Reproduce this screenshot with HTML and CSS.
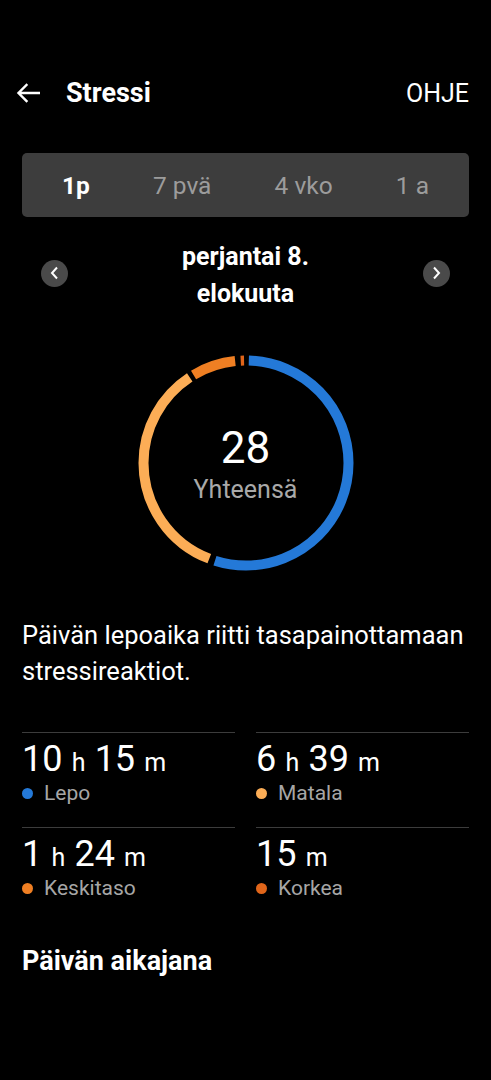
FILE: index.html
```html
<!DOCTYPE html>
<html lang="fi">
<head>
    <meta charset="UTF-8">
    <meta name="viewport" content="width=device-width, initial-scale=1.0">
    <title>Stressi</title>
    <link rel="stylesheet" href="styles.css">
</head>
<body>
    <header class="top-bar">
        <a href="#" class="back-btn" aria-label="Takaisin">
            <svg width="24" height="20" viewBox="0 0 24 20">
                <path d="M23 10H3 M10.5 2 L2.5 10 L10.5 18" fill="none" stroke="#fff" stroke-width="2.4" stroke-linecap="square"/>
            </svg>
        </a>
        <h1>Stressi</h1>
        <a href="#" class="help-link">OHJE</a>
    </header>

    <nav class="range-tabs">
        <span class="tab active">1p</span>
        <span class="tab">7 pvä</span>
        <span class="tab">4 vko</span>
        <span class="tab">1 a</span>
    </nav>

    <section class="date-nav">
        <button class="round-btn" aria-label="Edellinen">
            <svg width="14" height="16" viewBox="0 0 14 16">
                <path d="M9 2.5 L4 8 L9 13.5" fill="none" stroke="#fff" stroke-width="2"/>
            </svg>
        </button>
        <div class="date-label">perjantai 8.<br>elokuuta</div>
        <button class="round-btn" aria-label="Seuraava">
            <svg width="14" height="16" viewBox="0 0 14 16">
                <path d="M5 2.5 L10 8 L5 13.5" fill="none" stroke="#fff" stroke-width="2"/>
            </svg>
        </button>
    </section>

    <section class="ring-wrap">
        <svg class="ring" width="220" height="220" viewBox="0 0 220 220">
            <g transform="rotate(-90 110 110)" fill="none" stroke-width="10">
                <circle cx="110" cy="110" r="102.5" stroke="#2479d8" stroke-dasharray="350.3 644" stroke-dashoffset="-2.9"/>
                <circle cx="110" cy="110" r="102.5" stroke="#fcad56" stroke-dasharray="224.6 644" stroke-dashoffset="-359.1"/>
                <circle cx="110" cy="110" r="102.5" stroke="#ef7f23" stroke-dasharray="44 644" stroke-dashoffset="-588.2"/>
                <circle cx="110" cy="110" r="102.5" stroke="#e0651a" stroke-dasharray="3.4 644" stroke-dashoffset="-637.8"/>
            </g>
        </svg>
        <div class="ring-center">
            <div class="ring-value">28</div>
            <div class="ring-caption">Yhteensä</div>
        </div>
    </section>

    <p class="summary">Päivän lepoaika riitti tasapainottamaan stressireaktiot.</p>

    <section class="stats">
        <div class="stat">
            <div class="stat-value">10<span class="unit"> h </span>15<span class="unit"> m</span></div>
            <div class="stat-label"><span class="dot rest"></span>Lepo</div>
        </div>
        <div class="stat">
            <div class="stat-value">6<span class="unit"> h </span>39<span class="unit"> m</span></div>
            <div class="stat-label"><span class="dot low"></span>Matala</div>
        </div>
        <div class="stat">
            <div class="stat-value">1<span class="unit"> h </span>24<span class="unit"> m</span></div>
            <div class="stat-label"><span class="dot medium"></span>Keskitaso</div>
        </div>
        <div class="stat">
            <div class="stat-value">15<span class="unit"> m</span></div>
            <div class="stat-label"><span class="dot high"></span>Korkea</div>
        </div>
    </section>

    <h2 class="timeline-title">Päivän aikajana</h2>
</body>
</html>
```

FILE: styles.css
```css
body {
    margin: 0;
    background: #000;
    color: #fff;
    font-family: Roboto, "Noto Sans", sans-serif;
}
.top-bar {
    display: flex;
    align-items: center;
    height: 56px;
    margin-top: 65px;
    padding: 0 22px 0 16px;
}
.back-btn {
    display: flex;
    margin-right: 26px;
}
.top-bar h1 {
    flex: 1;
    margin: 0;
    font-size: 27px;
    font-weight: 700;
}
.help-link {
    color: #fff;
    text-decoration: none;
    font-size: 25px;
}
.range-tabs {
    display: flex;
    justify-content: space-between;
    align-items: center;
    height: 64px;
    margin: 32px 22px 0;
    padding: 0 40px;
    background: #3d3d3d;
    border-radius: 5px;
}
.tab {
    font-size: 24.5px;
    color: #9c9c9c;
}
.tab.active {
    color: #fff;
    font-weight: 700;
}
.date-nav {
    display: flex;
    align-items: center;
    justify-content: space-between;
    margin: 21px 41px 0;
}
.round-btn {
    display: flex;
    align-items: center;
    justify-content: center;
    width: 27px;
    height: 27px;
    padding: 0;
    margin-top: -4px;
    border: none;
    border-radius: 50%;
    background: #4a4a4a;
}
.date-label {
    text-align: center;
    font-size: 25px;
    font-weight: 700;
    line-height: 37px;
}
.ring-wrap {
    display: grid;
    justify-content: center;
    margin-top: 41px;
}
.ring, .ring-center {
    grid-area: 1 / 1;
}
.ring {
    display: block;
}
.ring-center {
    padding-top: 71px;
    text-align: center;
}
.ring-value {
    font-size: 44px;
    line-height: 48px;
}
.ring-caption {
    margin-top: 3px;
    font-size: 25px;
    line-height: 30px;
    color: #a9a9a9;
}
.summary {
    margin: 44px 22px 0;
    font-size: 25.5px;
    line-height: 36px;
}
.stats {
    display: grid;
    grid-template-columns: 1fr 1fr;
    column-gap: 21px;
    margin: 43px 22px 0;
}
.stat {
    border-top: 1px solid #3c3c3c;
    padding: 6px 0 21px;
}
.stat-value {
    height: 40px;
    font-size: 36px;
    line-height: 40px;
    word-spacing: 3px;
}
.unit {
    font-size: 25px;
}
.stat-label {
    display: flex;
    align-items: center;
    margin-top: 1px;
    font-size: 21px;
    line-height: 26px;
    color: #a6a6a6;
}
.dot {
    width: 11px;
    height: 11px;
    border-radius: 50%;
    margin-right: 11px;
}
.dot.rest { background: #2479d8; }
.dot.low { background: #fcad56; }
.dot.medium { background: #ef7f23; }
.dot.high { background: #e0651a; }
.timeline-title {
    margin: 23px 22px 0;
    font-size: 27px;
    font-weight: 700;
    line-height: 32px;
}
```
